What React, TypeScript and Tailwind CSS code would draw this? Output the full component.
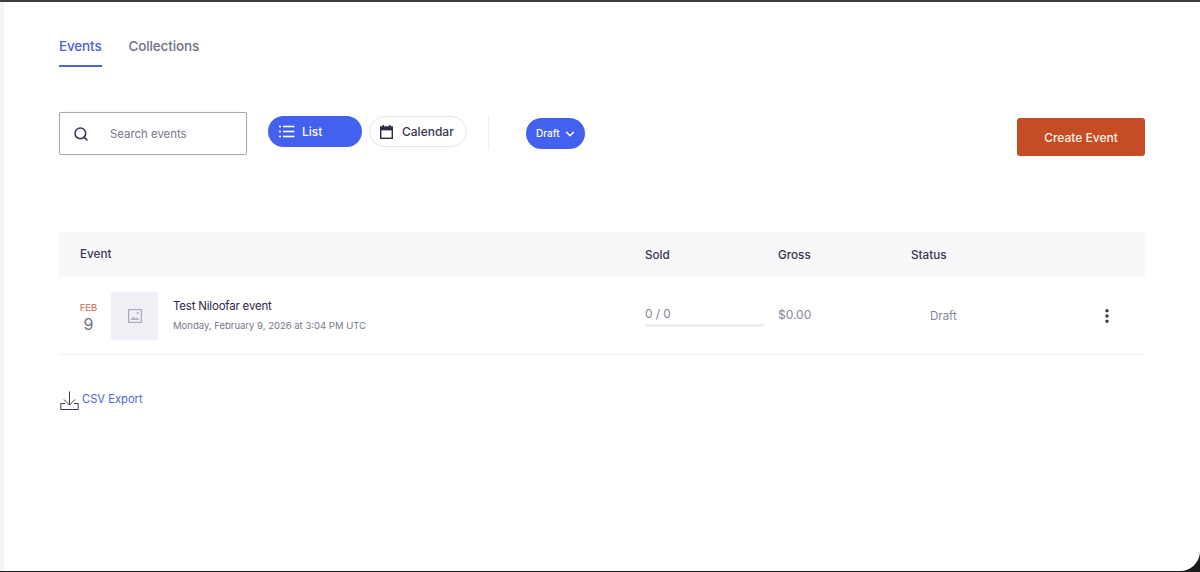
import { Search, ChevronDown, EllipsisVertical } from "lucide-react";

const FONT = "font-['Inter','Liberation_Sans',sans-serif]";

function ImagePlaceholder() {
  return (
    <svg width="14" height="14" viewBox="0 0 14 14" fill="none">
      <rect x="0.6" y="0.6" width="12.8" height="12.8" fill="none" stroke="#a9a9b5" strokeWidth="1.2" />
      <path d="M2.5 11 L5.5 7.5 L7.5 9.5 L9 8.2 L11.5 11 Z" fill="#b4b4bf" />
      <circle cx="9.7" cy="4.2" r="1.1" fill="#b4b4bf" />
    </svg>
  );
}

function ExportIcon() {
  return (
    <svg width="19" height="20" viewBox="0 0 19 20" fill="none" stroke="#39364f" strokeWidth="1">
      <path d="M9.5 0.5 V14 M4 8.5 L9.5 14 L15 8.5" />
      <path d="M5 12.5 H0.8 V18.5 H18.2 V12.5 H14" />
    </svg>
  );
}

function ListIcon() {
  return (
    <svg width="16" height="13" viewBox="0 0 16 13" fill="white">
      <rect x="0" y="0.5" width="2" height="2" rx="1" />
      <rect x="0" y="5.5" width="2" height="2" rx="1" />
      <rect x="0" y="10.5" width="2" height="2" rx="1" />
      <rect x="4" y="0.7" width="11.5" height="1.6" />
      <rect x="4" y="5.7" width="11.5" height="1.6" />
      <rect x="4" y="10.7" width="11.5" height="1.6" />
    </svg>
  );
}

function CalendarIcon() {
  return (
    <svg width="13" height="14" viewBox="0 0 13 14" fill="none">
      <rect x="2.5" y="0" width="1.6" height="2.5" fill="#2f2d44" />
      <rect x="8.9" y="0" width="1.6" height="2.5" fill="#2f2d44" />
      <rect x="0.7" y="2" width="11.6" height="11.3" stroke="#2f2d44" strokeWidth="1.4" />
      <rect x="0.7" y="2" width="11.6" height="3.4" fill="#2f2d44" />
    </svg>
  );
}

export default function App() {
  return (
    <div className={`${FONT} w-[1200px] h-[572px] overflow-hidden bg-[#1c1c1e] border-t-2 border-[#3f3f42] pb-[1px]`}>
      <div className="h-[569px] bg-white rounded-br-[20px] border-l-[4px] border-[#f3f3f8] pl-[55px] pr-[55px] flex flex-col">
        <div className="flex gap-[27px] h-[65px] pt-[35px] text-[13.5px] font-medium leading-[18px] tracking-[-0.15px]">
          <div className="h-[30px] border-b-2 border-[#4d63d6] text-[#4d63d6]">Events</div>
          <div className="text-[#6f7287]">Collections</div>
        </div>

        <div className="flex items-start mt-[45px] h-[44px]">
          <div className="w-[188px] h-[43px] border border-[#a9a8b3] rounded-[2px] flex items-center pl-[13px] shadow-[0_0_1px_#c4c4cc]">
            <Search size={16} strokeWidth={2.3} color="#39364f" />
            <span className="ml-[21px] pt-[2px] text-[11.4px] text-[#77778a] leading-none">Search events</span>
          </div>
          <div className="ml-[21px] mt-[4px] w-[94px] h-[31px] rounded-full bg-[#4361ee] flex items-center pl-[11px] text-white text-[12px] font-medium">
            <ListIcon />
            <span className="ml-[7px]">List</span>
          </div>
          <div className="ml-[7px] mt-[4px] w-[98px] h-[31px] rounded-full border border-[#e4e4ea] bg-white flex items-center pl-[10px] text-[#39364f] text-[12px] font-medium">
            <CalendarIcon />
            <span className="ml-[9px]">Calendar</span>
          </div>
          <div className="ml-[21px] mt-[4px] w-px h-[34px] bg-[#eeedf2]" />
          <div className="ml-[37px] mt-[6px] w-[59px] h-[31px] rounded-full bg-[#4361ee] flex items-center pl-[10px] text-white text-[10px] font-medium">
            <span>Draft</span>
            <ChevronDown size={14} strokeWidth={2.5} className="ml-[3px]" />
          </div>
          <div className="ml-auto mt-[6px] w-[128px] h-[38px] rounded-[3px] bg-[#c44d25] flex items-center justify-center pt-[1px] text-[#fff1ea] text-[12px] font-medium">
            Create Event
          </div>
        </div>

        <div className="mt-[76px] w-[1086px]">
          <div className="grid grid-cols-[586px_133px_133px_1fr] h-[45px] bg-[#f8f8fa] items-center pt-[2px] text-[11.7px] font-medium text-[#39364f]">
            <div className="pl-[21px] pb-[2px]">Event</div>
            <div>Sold</div>
            <div>Gross</div>
            <div>Status</div>
          </div>
          <div className="grid grid-cols-[586px_133px_133px_1fr] h-[78px] border-b border-[#f0eff4] items-center">
            <div className="flex items-center">
              <div className="w-[52px] pl-[7px] pt-[5px] flex flex-col items-center">
                <span className="text-[9.5px] leading-[12px] text-[#c9694a]">FEB</span>
                <span className="text-[16px] leading-[20px] text-[#6f7287]">9</span>
              </div>
              <div className="w-[47px] h-[48px] bg-[#f0f1f6] flex items-center justify-center">
                <ImagePlaceholder />
              </div>
              <div className="ml-[15px] flex flex-col">
                <span className="text-[11.5px] leading-[16px] text-[#2f2a45] tracking-[-0.2px] -mt-[1px]">Test Niloofar event</span>
                <span className="mt-[5px] text-[9.5px] leading-[14px] text-[#77778a]">Monday, February 9, 2026 at 3:04 PM UTC</span>
              </div>
            </div>
            <div className="pt-[2px]">
              <div className="text-[12px] leading-[16px] text-[#85859a] tracking-[-0.1px]">0 / 0</div>
              <div className="mt-[2px] w-[119px] h-[3px] rounded-full bg-[#eeedf2]" />
            </div>
            <div className="text-[12px] text-[#85859a] pb-[2px]">$0.00</div>
            <div className="flex items-center justify-between pr-[29px]">
              <span className="ml-[19px] pt-[3px] text-[11.5px] text-[#85859a]">Draft</span>
              <EllipsisVertical size={18} strokeWidth={2.6} color="#39364f" />
            </div>
          </div>
          <div className="mt-[36px] flex items-center pl-px">
            <ExportIcon />
            <span className="ml-[3px] mb-[4px] text-[11.2px] text-[#4d63d6]">CSV Export</span>
          </div>
        </div>
      </div>
    </div>
  );
}
